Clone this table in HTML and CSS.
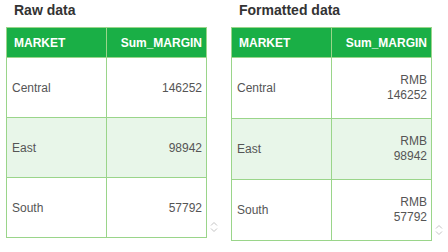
FILE: index.html
```html
<!DOCTYPE html>
<html>
<head>
<meta charset="utf-8">
<link rel="stylesheet" href="styles.css">
</head>
<body>
<div class="page">
  <section class="panel">
    <h2 class="title">Raw data</h2>
    <div class="body">
      <div class="grid">
        <div class="cell head">MARKET</div>
        <div class="cell head num">Sum_MARGIN</div>
        <div class="cell row">Central</div>
        <div class="cell row num">146252</div>
        <div class="cell row alt">East</div>
        <div class="cell row alt num">98942</div>
        <div class="cell row">South</div>
        <div class="cell row num">57792</div>
      </div>
      <svg class="spin" width="8" height="12" viewBox="0 0 8 12"><path d="M1 4.5 L4 1.5 L7 4.5 M1 7.5 L4 10.5 L7 7.5" fill="none" stroke="#c4c4c4" stroke-width="1"/></svg>
    </div>
  </section>
  <section class="panel">
    <h2 class="title">Formatted data</h2>
    <div class="body">
      <div class="grid">
        <div class="cell head">MARKET</div>
        <div class="cell head num">Sum_MARGIN</div>
        <div class="cell row tall">Central</div>
        <div class="cell row tall num"><span>RMB<br>146252</span></div>
        <div class="cell row tall alt">East</div>
        <div class="cell row tall alt num"><span>RMB<br>98942</span></div>
        <div class="cell row tall">South</div>
        <div class="cell row tall num"><span>RMB<br>57792</span></div>
      </div>
      <svg class="spin" width="8" height="12" viewBox="0 0 8 12"><path d="M1 4.5 L4 1.5 L7 4.5 M1 7.5 L4 10.5 L7 7.5" fill="none" stroke="#c4c4c4" stroke-width="1"/></svg>
    </div>
  </section>
</div>
</body>
</html>
```
FILE: styles.css
```css
html, body {
  margin: 0;
  padding: 0;
  background: #ffffff;
}
body {
  font-family: "Liberation Sans", Arial, sans-serif;
  font-size: 12px;
  color: #555555;
}
.page {
  display: flex;
  gap: 13px;
  padding-left: 6px;
}
.panel {
  display: flex;
  flex-direction: column;
  width: 212px;
}
.title {
  margin: 0 0 9px 0;
  padding: 2px 0 0 8px;
  font-size: 14px;
  line-height: 16px;
  font-weight: bold;
  color: #333333;
}
.body {
  display: flex;
  align-items: flex-end;
  gap: 3px;
}
.grid {
  display: grid;
  grid-template-columns: 100px 100px;
  border-left: 1px solid #9ad58a;
  border-top: 1px solid #9ad58a;
}
.cell {
  box-sizing: border-box;
  border-right: 1px solid #9ad58a;
  border-bottom: 1px solid #9ad58a;
  display: flex;
  align-items: center;
  padding: 0 4px 0 5px;
}
.head {
  height: 30px;
  background: #1aaf46;
  color: #ffffff;
  font-weight: bold;
  padding-left: 7px;
}
.row {
  height: 60px;
}
.tall {
  height: 61px;
}
.alt {
  background: #e8f6e9;
}
.num {
  justify-content: flex-end;
  text-align: right;
}
.num span {
  line-height: 15px;
}
.spin {
  display: block;
  margin-bottom: 5px;
}
```
